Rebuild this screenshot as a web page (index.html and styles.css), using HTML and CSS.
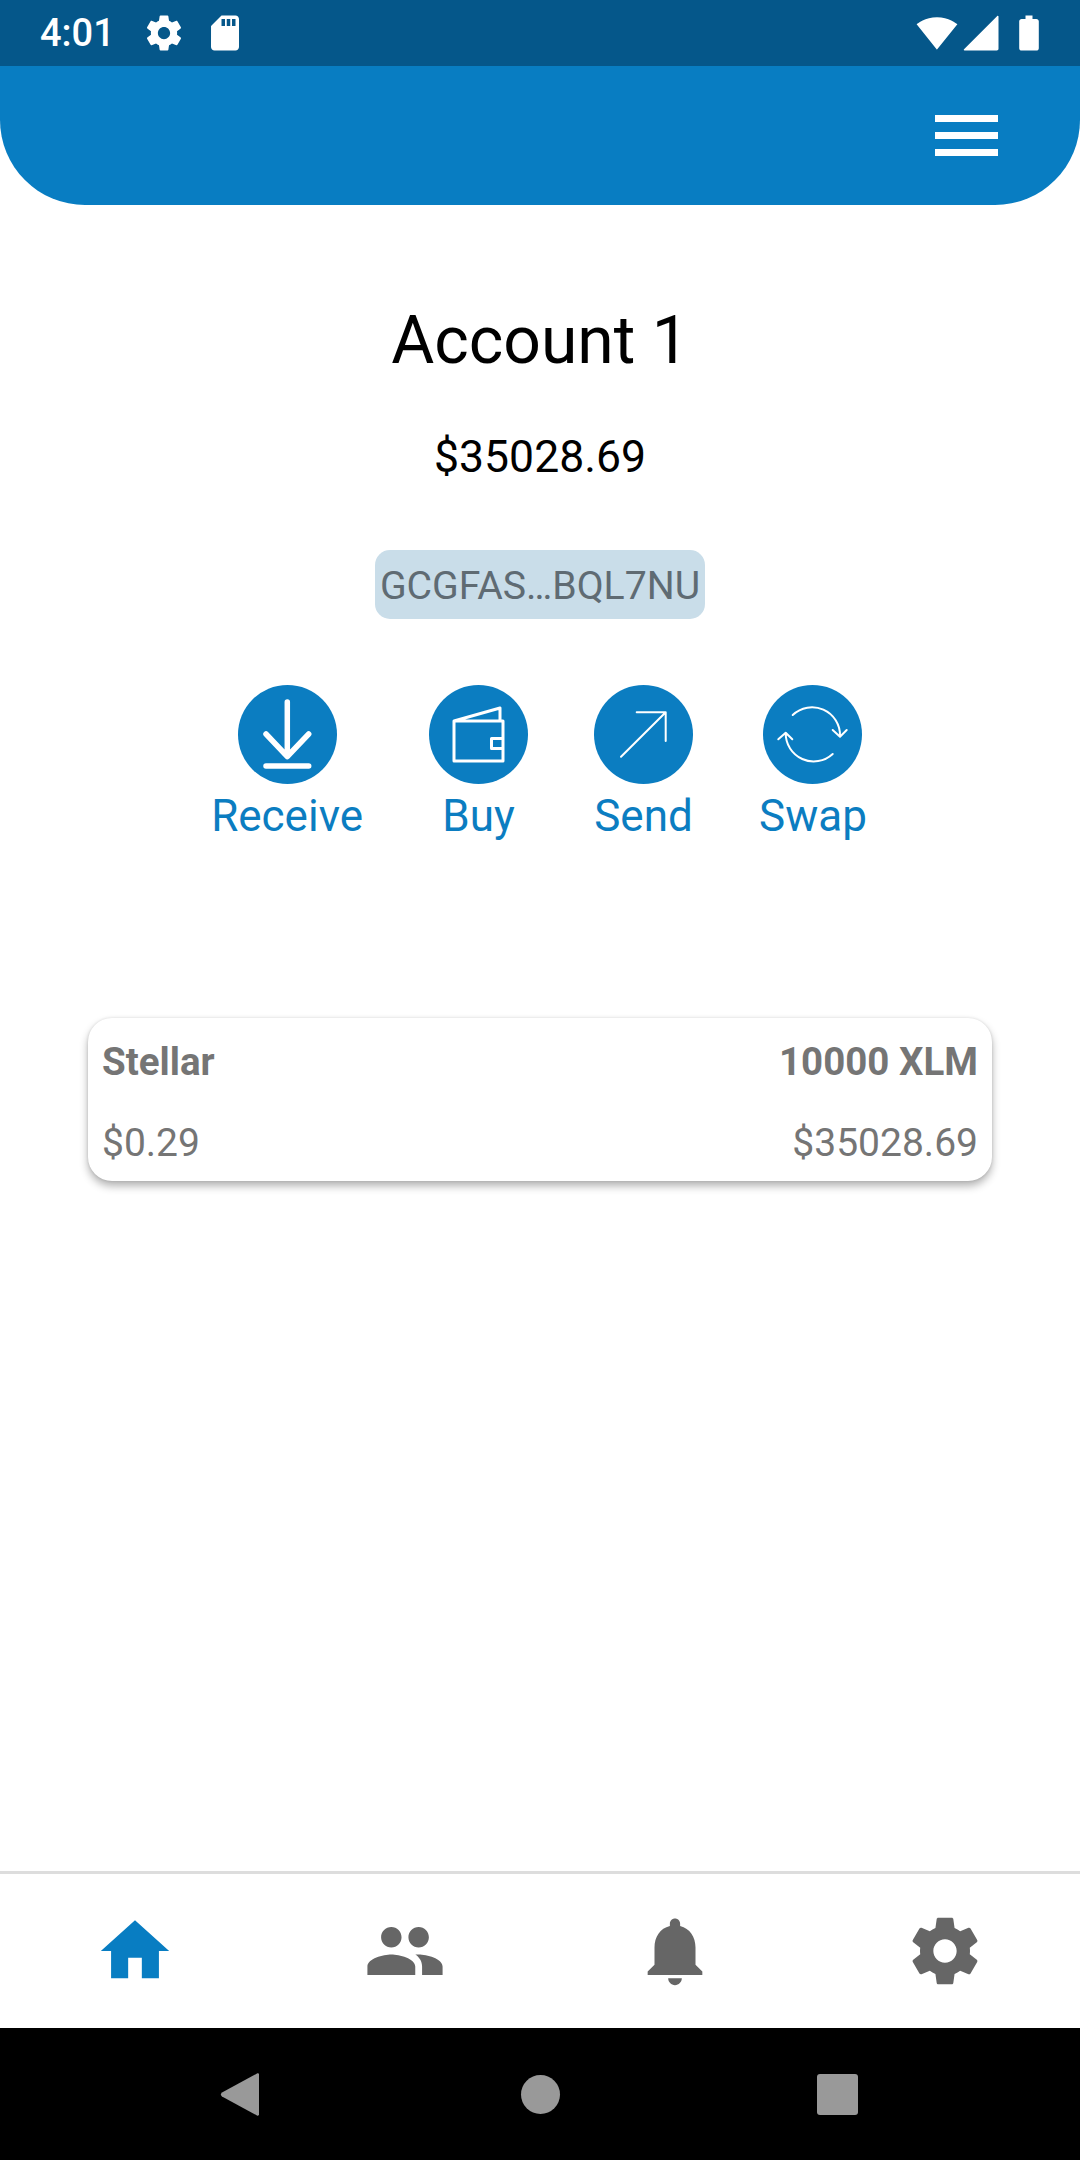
FILE: index.html
```html
<!DOCTYPE html>
<html lang="en">
<head>
    <meta charset="UTF-8">
    <meta name="viewport" content="width=device-width, initial-scale=1.0">
    <title>Wallet</title>
    <link rel="stylesheet" href="styles.css">
</head>
<body>
    <div class="screen">
        <!-- Status Bar -->
        <div class="status-bar">
            <div class="status-left">
                <span class="status-time">4:01</span>
                <svg class="status-icon" viewBox="0 0 24 24"><path d="M19.43 12.98c.04-.32.07-.64.07-.98s-.03-.66-.07-.98l2.11-1.65c.19-.15.24-.42.12-.64l-2-3.46c-.12-.22-.39-.3-.61-.22l-2.49 1c-.52-.4-1.08-.73-1.69-.98l-.38-2.65C14.46 2.18 14.25 2 14 2h-4c-.25 0-.46.18-.49.42l-.38 2.65c-.61.25-1.17.59-1.69.98l-2.49-1c-.23-.09-.49 0-.61.22l-2 3.46c-.13.22-.07.49.12.64l2.11 1.65c-.04.32-.07.65-.07.98s.03.66.07.98l-2.11 1.65c-.19.15-.24.42-.12.64l2 3.46c.12.22.39.3.61.22l2.49-1c.52.4 1.08.73 1.69.98l.38 2.65c.03.24.24.42.49.42h4c.25 0 .46-.18.49-.42l.38-2.65c.61-.25 1.17-.59 1.69-.98l2.49 1c.23.09.49 0 .61-.22l2-3.46c.12-.22.07-.49-.12-.64l-2.11-1.65zM12 15.5c-1.93 0-3.5-1.57-3.5-3.5s1.57-3.5 3.5-3.5 3.5 1.57 3.5 3.5-1.57 3.5-3.5 3.5z"/></svg>
                <svg class="status-icon" viewBox="0 0 24 24"><path d="M18 2h-8L4.02 8 4 20c0 1.1.9 2 2 2h12c1.1 0 2-.9 2-2V4c0-1.1-.9-2-2-2zm-6 6h-2V4h2v4zm3 0h-2V4h2v4zm3 0h-2V4h2v4z"/></svg>
            </div>
            <div class="status-right">
                <svg class="status-icon" viewBox="0 0 24 24"><path d="M12.01 21.49L23.64 7c-.45-.34-4.93-4-11.64-4C5.28 3 .81 6.66.36 7l11.64 14.5.01-.01z"/></svg>
                <svg class="status-icon" viewBox="0 0 24 24"><path d="M2.6 22h18.4c.6 0 1-.4 1-1V2.600c0-.5-.4-.6-.7-.3L2.300 21.300c-.3.3-.2.7.3.7z"/></svg>
                <svg class="status-icon battery-icon" viewBox="0 0 24 24"><path d="M16.17 4H14V2h-4v2H7.83C7 4 6.400 4.600 6.400 5.330v15.340C6.400 21.400 7 22 7.830 22h8.340c.83 0 1.430-.6 1.430-1.330V5.330C17.600 4.600 17 4 16.170 4z"/></svg>
            </div>
        </div>

        <!-- Header -->
        <div class="header">
            <div class="menu-button">
                <span></span>
                <span></span>
                <span></span>
            </div>
        </div>

        <!-- Account Info -->
        <div class="main">
            <h1 class="account-name">Account 1</h1>
            <p class="account-balance">$35028.69</p>
            <div class="address-chip">GCGFAS…BQL7NU</div>

            <div class="actions">
                <div class="action">
                    <svg class="action-icon" viewBox="0 0 99 99">
                        <circle class="action-bg" cx="49.5" cy="49.5" r="49.5"/>
                        <path class="stroke-thick" d="M49.3 17V71.5M28 49L49.3 71.5L70.7 49M28 81H70.7"/>
                    </svg>
                    <span class="action-label">Receive</span>
                </div>
                <div class="action">
                    <svg class="action-icon" viewBox="0 0 99 99">
                        <circle class="action-bg" cx="49.5" cy="49.5" r="49.5"/>
                        <path class="stroke-mid" d="M25 36H74V76H25ZM25 36L71 23V36M74 53.5H62.5V63.5H74"/>
                    </svg>
                    <span class="action-label">Buy</span>
                </div>
                <div class="action">
                    <svg class="action-icon" viewBox="0 0 99 99">
                        <circle class="action-bg" cx="49.5" cy="49.5" r="49.5"/>
                        <path class="stroke-thin" d="M27 71.7L71.7 27.3M42.7 27.3H71.7V56"/>
                    </svg>
                    <span class="action-label">Send</span>
                </div>
                <div class="action">
                    <svg class="action-icon" viewBox="0 0 99 99">
                        <circle class="action-bg" cx="49.5" cy="49.5" r="49.5"/>
                        <path class="stroke-thin" d="M29.7 30A28 28 0 0 1 77 51M69.7 45L77 51.7L83.7 45M69.7 69A28 28 0 0 1 22.7 48M15.3 54.3L22.7 47.7L29.3 54.3"/>
                    </svg>
                    <span class="action-label">Swap</span>
                </div>
            </div>

            <!-- Asset Card -->
            <div class="asset-card">
                <div class="asset-row">
                    <span class="asset-bold">Stellar</span>
                    <span class="asset-bold">10000 XLM</span>
                </div>
                <div class="asset-row asset-row-bottom">
                    <span>$0.29</span>
                    <span>$35028.69</span>
                </div>
            </div>
        </div>

        <!-- Bottom Nav -->
        <div class="bottom-nav">
            <div class="nav-item active">
                <svg class="nav-icon" viewBox="0 0 24 24"><path d="M10 20v-6h4v6h5v-8h3L12 3 2 12h3v8z"/></svg>
            </div>
            <div class="nav-item">
                <svg class="nav-icon" viewBox="0 0 24 24"><path d="M16 11c1.66 0 2.99-1.34 2.99-3S17.66 5 16 5c-1.66 0-3 1.34-3 3s1.34 3 3 3zm-8 0c1.66 0 2.99-1.34 2.99-3S9.66 5 8 5C6.34 5 5 6.34 5 8s1.34 3 3 3zm0 2c-2.33 0-7 1.17-7 3.5V19h14v-2.5c0-2.33-4.67-3.5-7-3.5zm8 0c-.29 0-.62.02-.97.05 1.16.84 1.97 1.97 1.97 3.45V19h6v-2.5c0-2.33-4.67-3.5-7-3.5z"/></svg>
            </div>
            <div class="nav-item">
                <svg class="nav-icon" viewBox="0 0 24 24"><path d="M12 22c1.1 0 2-.9 2-2h-4c0 1.1.89 2 2 2zm6-6v-5c0-3.07-1.64-5.64-4.5-6.32V4c0-.83-.67-1.5-1.5-1.5s-1.5.67-1.5 1.5v.68C7.63 5.36 6 7.92 6 11v5l-2 2v1h16v-1l-2-2z"/></svg>
            </div>
            <div class="nav-item">
                <svg class="nav-icon gear-icon" viewBox="0 0 24 24"><path d="M19.43 12.98c.04-.32.07-.64.07-.98s-.03-.66-.07-.98l2.11-1.65c.19-.15.24-.42.12-.64l-2-3.46c-.12-.22-.39-.3-.61-.22l-2.49 1c-.52-.4-1.08-.73-1.69-.98l-.38-2.65C14.46 2.18 14.25 2 14 2h-4c-.25 0-.46.18-.49.42l-.38 2.65c-.61.25-1.17.59-1.69.98l-2.49-1c-.23-.09-.49 0-.61.22l-2 3.46c-.13.22-.07.49.12.64l2.11 1.65c-.04.32-.07.65-.07.98s.03.66.07.98l-2.11 1.65c-.19.15-.24.42-.12.64l2 3.46c.12.22.39.3.61.22l2.49-1c.52.4 1.08.73 1.69.98l.38 2.65c.03.24.24.42.49.42h4c.25 0 .46-.18.49-.42l.38-2.65c.61-.25 1.17-.59 1.69-.98l2.49 1c.23.09.49 0 .61-.22l2-3.46c.12-.22.07-.49-.12-.64l-2.11-1.65zM12 15.5c-1.93 0-3.5-1.57-3.5-3.5s1.57-3.5 3.5-3.5 3.5 1.57 3.5 3.5-1.57 3.5-3.5 3.5z"/></svg>
            </div>
        </div>

        <!-- Android Nav -->
        <div class="system-nav">
            <svg class="back-key" viewBox="0 0 39 45"><path d="M37 1.5L2 20.5c-1.5 1-1.500 3 0 4L37 43.500c1 .5 2 0 2-1V2.500c0-1-1-1.500-2-1z"/></svg>
            <div class="home-key"></div>
            <div class="recent-key"></div>
        </div>
    </div>
</body>
</html>
```

FILE: styles.css
```css
/* General Styles */
body {
    font-family: Roboto, "Liberation Sans", sans-serif;
    margin: 0;
    padding: 0;
    background-color: #ffffff;
}

.screen {
    display: flex;
    flex-direction: column;
    width: 1080px;
    height: 2160px;
    overflow: hidden;
}

/* Status Bar */
.status-bar {
    display: flex;
    align-items: center;
    justify-content: space-between;
    height: 66px;
    padding: 0 30px 0 40px;
    background-color: #05578a;
    color: white;
}

.status-left, .status-right {
    display: flex;
    align-items: center;
}

.status-left {
    gap: 19px;
}

.status-right {
    gap: 2px;
}

.status-time {
    font-size: 38px;
    font-weight: 500;
    width: 84px;
}

.battery-icon {
    margin-left: 4px;
}

.status-icon {
    width: 42px;
    height: 42px;
    fill: white;
}

/* Header */
.header {
    display: flex;
    justify-content: flex-end;
    height: 139px;
    padding: 49px 82px 0 0;
    box-sizing: border-box;
    background-color: #087dc2;
    border-radius: 0 0 85px 85px;
}

.menu-button {
    display: flex;
    flex-direction: column;
    gap: 10px;
    width: 63px;
}

.menu-button span {
    height: 7px;
    background-color: white;
}

/* Account Info */
.main {
    flex: 1;
    display: flex;
    flex-direction: column;
    align-items: center;
}

.account-name {
    margin: 97px 0 0;
    font-size: 66px;
    font-weight: 400;
    color: #000000;
}

.account-balance {
    margin: 52px 0 0;
    font-size: 44.5px;
    color: #000000;
}

.address-chip {
    margin-top: 67px;
    width: 330px;
    height: 69px;
    box-sizing: border-box;
    padding-top: 13px;
    font-size: 39.2px;
    text-align: center;
    white-space: nowrap;
    color: #5f6b73;
    background-color: #c9dde9;
    border-radius: 15px;
}

/* Actions */
.actions {
    display: flex;
    justify-content: center;
    gap: 66px;
    margin: 66px 2px 0 0;
}

.action {
    display: flex;
    flex-direction: column;
    align-items: center;
    gap: 6px;
}

.action-icon {
    display: block;
    width: 99px;
    height: 99px;
}

.action-bg {
    fill: #0b7dc1;
}

.action-icon path {
    fill: none;
    stroke: white;
    stroke-linecap: round;
    stroke-linejoin: round;
}

.action-icon .stroke-thick {
    stroke-width: 5.5;
}

.action-icon .stroke-mid {
    stroke-width: 3;
}

.action-icon .stroke-thin {
    stroke-width: 2;
}

.action-label {
    font-size: 44px;
    color: #0b7dc1;
}

/* Asset Card */
.asset-card {
    width: 904px;
    height: 163px;
    box-sizing: border-box;
    margin-top: 176px;
    padding: 0 14px;
    background: white;
    border-radius: 24px;
    box-shadow: 0 5px 8px rgba(0, 0, 0, 0.3), 0 0 3px rgba(0, 0, 0, 0.12);
}

.asset-row {
    display: flex;
    justify-content: space-between;
    margin-top: 21px;
    font-size: 39px;
    color: #757575;
}

.asset-row-bottom {
    margin-top: 36px;
}

.asset-bold {
    font-size: 38.5px;
    font-weight: 700;
}

/* Bottom Nav */
.bottom-nav {
    display: flex;
    align-items: center;
    height: 154px;
    border-top: 3px solid #dddddd;
}

.nav-item {
    flex: 1;
    display: flex;
    justify-content: center;
    fill: #666666;
}

.nav-item.active {
    fill: #087dc2;
}

.nav-icon {
    width: 82px;
    height: 82px;
}

.gear-icon {
    width: 80px;
}

/* Android Nav */
.system-nav {
    display: flex;
    align-items: center;
    height: 132px;
    background-color: #000000;
}

.back-key {
    width: 39px;
    height: 45px;
    margin-left: 220px;
    fill: #999999;
}

.home-key {
    width: 39px;
    height: 39px;
    margin-left: 262px;
    border-radius: 50%;
    background-color: #999999;
}

.recent-key {
    width: 41px;
    height: 41px;
    margin-left: 257px;
    border-radius: 3px;
    background-color: #999999;
}
```
